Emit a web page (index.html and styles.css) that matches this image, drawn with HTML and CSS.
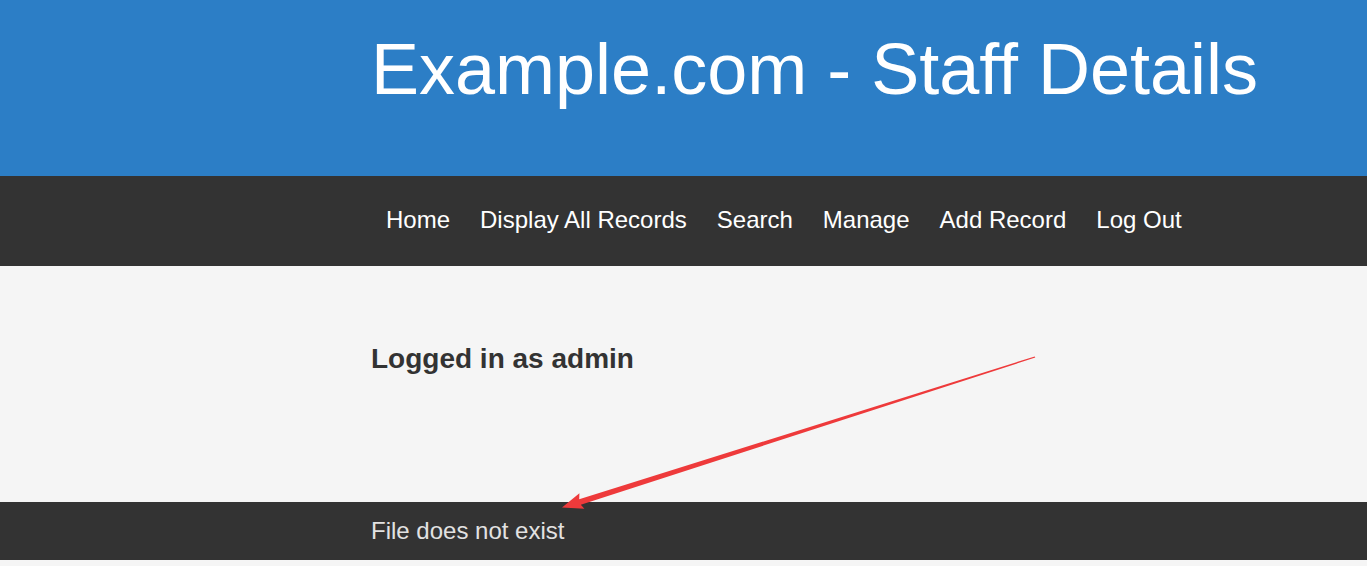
FILE: index.html
```html
<!DOCTYPE html>
<html lang="en">
<head>
<meta charset="utf-8">
<title>Example.com - Staff Details</title>
<link rel="stylesheet" href="styles.css">
</head>
<body>
<header class="site-header">
  <div class="wrap">
    <h1 class="site-title">Example.com - Staff Details</h1>
  </div>
</header>
<nav class="site-nav">
  <div class="wrap nav-list">
    <a href="#" class="nav-link">Home</a>
    <a href="#" class="nav-link">Display All Records</a>
    <a href="#" class="nav-link">Search</a>
    <a href="#" class="nav-link">Manage</a>
    <a href="#" class="nav-link">Add Record</a>
    <a href="#" class="nav-link">Log Out</a>
  </div>
</nav>
<main class="site-main">
  <div class="wrap">
    <h2 class="login-note">Logged in as admin</h2>
  </div>
</main>
<footer class="site-footer">
  <div class="wrap">
    <p class="footer-text">File does not exist</p>
  </div>
</footer>
<svg class="annotation" width="1367" height="566" viewBox="0 0 1367 566" aria-hidden="true">
  <polygon fill="#ee3a3b" points="562,507.5 584.4,508.8 580.8,504.8 1035.3,357.6 1034.7,356.4 579.2,499.3 579.4,493.2"/>
</svg>
</body>
</html>
```
FILE: styles.css
```css
html, body {
  margin: 0;
  padding: 0;
}
body {
  background: #f5f5f5;
  font-family: "Liberation Sans", Arial, sans-serif;
  position: relative;
  min-height: 566px;
}
.wrap {
  padding-left: 371px;
}
.site-header {
  background: #2c7ec6;
  height: 176px;
  box-sizing: border-box;
  padding-top: 33px;
}
.site-title {
  margin: 0;
  font-size: 72px;
  line-height: 72px;
  font-weight: normal;
  color: #ffffff;
}
.site-nav {
  background: #333333;
  height: 90px;
  box-sizing: border-box;
  padding-top: 32px;
}
.nav-list {
  display: flex;
}
.nav-link {
  color: #ffffff;
  text-decoration: none;
  font-size: 24px;
  line-height: 24px;
  padding: 0 15px;
}
.site-main {
  background: #f5f5f5;
  height: 236px;
  box-sizing: border-box;
  padding-top: 79px;
}
.login-note {
  margin: 0;
  font-size: 28px;
  line-height: 28px;
  font-weight: bold;
  color: #333333;
}
.site-footer {
  background: #333333;
  height: 58px;
  box-sizing: border-box;
  padding-top: 17px;
}
.footer-text {
  margin: 0;
  font-size: 24px;
  line-height: 24px;
  color: #e2e2e2;
}
.annotation {
  position: absolute;
  left: 0;
  top: 0;
  pointer-events: none;
}
```
